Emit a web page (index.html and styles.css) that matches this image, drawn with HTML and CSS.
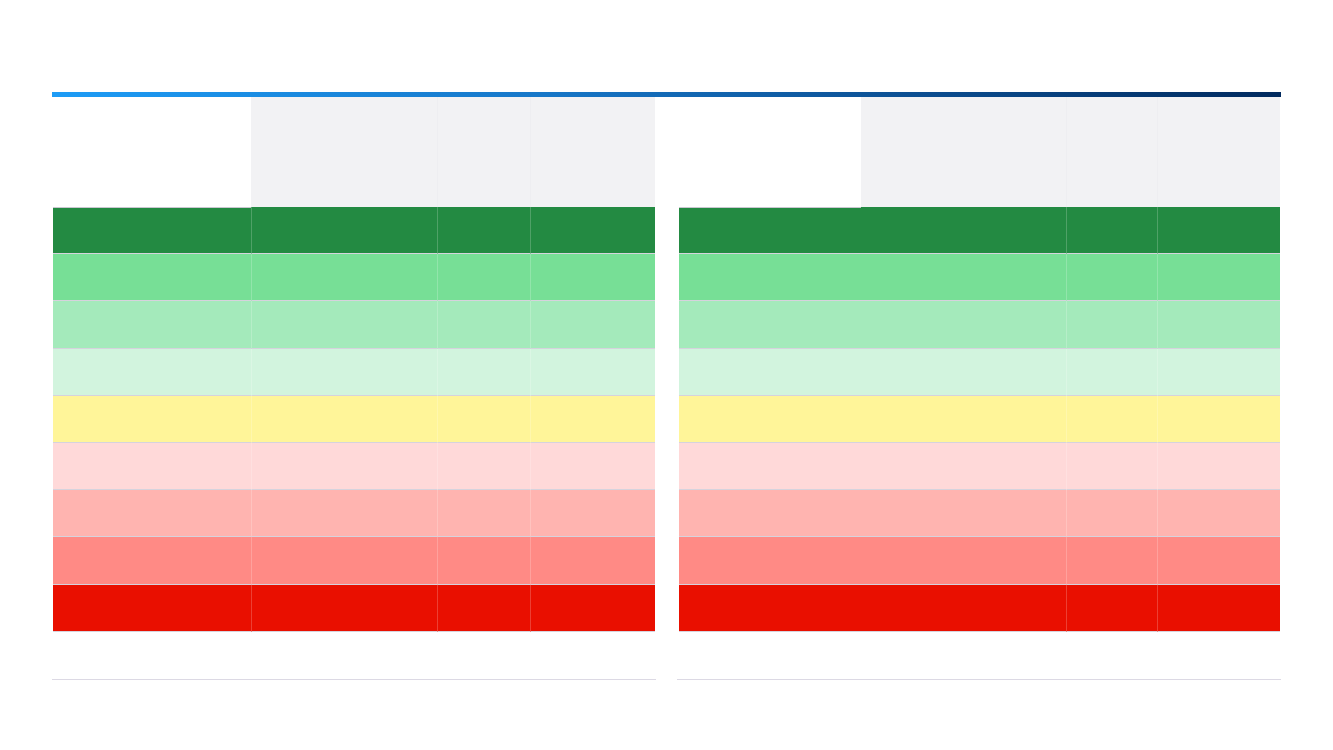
FILE: index.html
```html
<!DOCTYPE html>
<html lang="en">
<head>
<meta charset="utf-8">
<title>Rating scale</title>
<link rel="stylesheet" href="styles.css">
</head>
<body>
<div class="page">
  <div class="bar"></div>
  <div class="tables">
    <section class="panel panel-left">
      <div class="row head">
        <div class="hcell blank"></div>
        <div class="hcell"></div>
        <div class="hcell sep"></div>
        <div class="hcell sep"></div>
      </div>
      <div class="row r1"><div class="cell"></div><div class="cell v"></div><div class="cell v"></div><div class="cell v"></div></div>
      <div class="row r2"><div class="cell"></div><div class="cell v"></div><div class="cell v"></div><div class="cell v"></div></div>
      <div class="row r3"><div class="cell"></div><div class="cell v"></div><div class="cell v"></div><div class="cell v"></div></div>
      <div class="row r4"><div class="cell"></div><div class="cell v"></div><div class="cell v"></div><div class="cell v"></div></div>
      <div class="row r5"><div class="cell"></div><div class="cell v"></div><div class="cell v"></div><div class="cell v"></div></div>
      <div class="row r6"><div class="cell"></div><div class="cell v"></div><div class="cell v"></div><div class="cell v"></div></div>
      <div class="row r7"><div class="cell"></div><div class="cell v"></div><div class="cell v"></div><div class="cell v"></div></div>
      <div class="row r8"><div class="cell"></div><div class="cell v"></div><div class="cell v"></div><div class="cell v"></div></div>
      <div class="row r9"><div class="cell"></div><div class="cell v"></div><div class="cell v"></div><div class="cell v"></div></div>
    </section>
    <section class="panel panel-right">
      <div class="row head">
        <div class="hcell blank"></div>
        <div class="hcell"></div>
        <div class="hcell sep"></div>
        <div class="hcell sep"></div>
      </div>
      <div class="row r1"><div class="cell wide"></div><div class="cell v"></div><div class="cell v"></div></div>
      <div class="row r2"><div class="cell wide"></div><div class="cell v"></div><div class="cell v"></div></div>
      <div class="row r3"><div class="cell wide"></div><div class="cell v"></div><div class="cell v"></div></div>
      <div class="row r4"><div class="cell wide"></div><div class="cell v"></div><div class="cell v"></div></div>
      <div class="row r5"><div class="cell wide"></div><div class="cell v"></div><div class="cell v"></div></div>
      <div class="row r6"><div class="cell wide"></div><div class="cell v"></div><div class="cell v"></div></div>
      <div class="row r7"><div class="cell wide"></div><div class="cell v"></div><div class="cell v"></div></div>
      <div class="row r8"><div class="cell wide"></div><div class="cell v"></div><div class="cell v"></div></div>
      <div class="row r9"><div class="cell wide"></div><div class="cell v"></div><div class="cell v"></div></div>
    </section>
  </div>
</div>
</body>
</html>
```

FILE: styles.css
```css
* { box-sizing: border-box; }

body {
  margin: 0;
  background: #ffffff;
  font-family: "Liberation Sans", Arial, sans-serif;
}

.page {
  padding: 92px 52px 0;
}

.bar {
  height: 5px;
  background: linear-gradient(90deg, #1d9cf6 0%, #1777c8 40%, #0c4f92 70%, #012a5e 100%);
}

.tables {
  display: flex;
  gap: 21px;
}

.panel {
  flex: 1 1 0;
  padding-bottom: 47px;
  border-bottom: 1px solid #dcd9e4;
}

.panel-left { padding-left: 1px; padding-right: 1px; }
.panel-right { padding-left: 2px; padding-right: 1px; }

.row {
  display: grid;
}

.panel-left .row { grid-template-columns: 198px 186px 93px 125px; }
.panel-right .row { grid-template-columns: 182px 205px 91px 123px; }

.head {
  height: 110px;
}

.hcell {
  background: #f2f2f4;
}

.hcell.sep {
  border-left: 1px solid #eeeef1;
}

.hcell.blank {
  background: #ffffff;
  box-shadow: 0 1px 0 #c9c7d0;
  position: relative;
  z-index: 1;
}

.cell {
  height: 47.2px;
  border-bottom: 1px solid #d6d3dd;
}

.cell.v {
  border-left: 1px solid rgba(255, 255, 255, 0.2);
}

.cell.wide {
  grid-column: span 2;
}

.r1 .cell { background: #238a42; }
.r2 .cell { background: #77df96; }
.r3 .cell { background: #a4eabb; }
.r4 .cell { background: #d2f4de; }
.r5 .cell { background: #fff599; }
.r6 .cell { background: #ffd9d9; }
.r7 .cell { background: #ffb4b0; }
.r8 .cell { background: #ff8a85; }
.r9 .cell { background: #e90f00; }
```
